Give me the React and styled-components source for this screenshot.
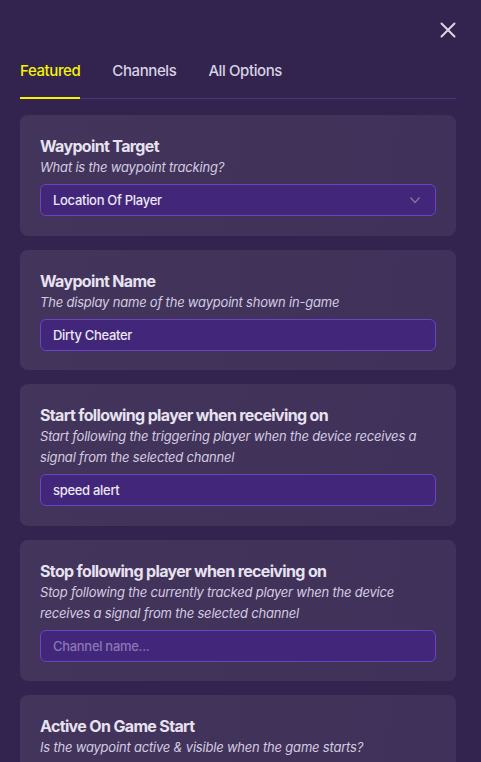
import React, { useState } from "react";
import styled, { createGlobalStyle } from "styled-components";

const GlobalStyle = createGlobalStyle`
  html, body {
    margin: 0;
    padding: 0;
    background: #33234f;
    overflow: hidden;
  }
  * { box-sizing: border-box; }
`;

const options = [
  {
    title: "Waypoint Target",
    desc: "What is the waypoint tracking?",
    kind: "select",
    value: "Location Of Player",
  },
  {
    title: "Waypoint Name",
    desc: "The display name of the waypoint shown in-game",
    kind: "input",
    value: "Dirty Cheater",
  },
  {
    title: "Start following player when receiving on",
    desc: "Start following the triggering player when the device receives a signal from the selected channel",
    kind: "input",
    value: "speed alert",
  },
  {
    title: "Stop following player when receiving on",
    desc: "Stop following the currently tracked player when the device receives a signal from the selected channel",
    kind: "input",
    value: "",
    placeholder: "Channel name...",
  },
  {
    title: "Active On Game Start",
    desc: "Is the waypoint active & visible when the game starts?",
    kind: "none",
  },
];

function App() {
  const [tab, setTab] = useState("Featured");

  return (
    <>
      <GlobalStyle />
      <Panel>
        <Header>
          <CloseButton aria-label="close">
            <svg width="16" height="16" viewBox="0 0 16 16">
              <path d="M1.5 1.5 L14.5 14.5 M14.5 1.5 L1.5 14.5" stroke="#dcd6e6" strokeWidth="2" strokeLinecap="round" />
            </svg>
          </CloseButton>
        </Header>

        <Tabs>
          {["Featured", "Channels", "All Options"].map((t) => (
            <Tab key={t} active={tab === t} onClick={() => setTab(t)}>
              {t}
            </Tab>
          ))}
        </Tabs>

        <CardList>
          {options.map((o) => (
            <Card key={o.title}>
              <Title>{o.title}</Title>
              <Desc>{o.desc}</Desc>
              {o.kind === "select" && (
                <Field>
                  <span>{o.value}</span>
                  <svg width="12" height="8" viewBox="0 0 12 8">
                    <polyline points="1.5,1.5 6,6.5 10.5,1.5" fill="none" stroke="#86769f" strokeWidth="1.2" />
                  </svg>
                </Field>
              )}
              {o.kind === "input" && (
                <TextInput defaultValue={o.value} placeholder={o.placeholder} />
              )}
            </Card>
          ))}
        </CardList>
      </Panel>
    </>
  );
}

export default App;

const Panel = styled.div`
  height: 762px;
  overflow: hidden;
  padding: 22px 25px 0 20px;
  font-family: Inter, "Liberation Sans", sans-serif;
  color: #e6e1ef;
`;

const Header = styled.div`
  display: flex;
  justify-content: flex-end;
  height: 16px;
`;

const CloseButton = styled.button`
  background: none;
  border: none;
  padding: 0;
  width: 16px;
  height: 16px;
  cursor: pointer;
  display: flex;
`;

const Tabs = styled.div`
  display: flex;
  gap: 32px;
  margin-top: 23px;
  border-bottom: 1px solid #4a3184;
`;

const Tab = styled.div`
  font-size: 15px;
  font-weight: 500;
  line-height: 20px;
  letter-spacing: -0.4px;
  padding-bottom: 16px;
  margin-bottom: -1px;
  cursor: pointer;
  color: ${({ active }) => (active ? "#f6f600" : "#d8d2e4")};
  border-bottom: 2px solid ${({ active }) => (active ? "#f6f600" : "transparent")};
`;

const CardList = styled.div`
  display: flex;
  flex-direction: column;
  gap: 14px;
  margin-top: 16px;
`;

const Card = styled.div`
  background: linear-gradient(100deg, #43345b 0%, #40315a 100%);
  border-radius: 8px;
  padding: 20px 20px 19.5px;
  display: flex;
  flex-direction: column;
`;

const Title = styled.div`
  font-size: 16px;
  font-weight: 700;
  line-height: 22px;
  letter-spacing: -0.65px;
  color: #e7e2ef;
`;

const Desc = styled.div`
  font-size: 13px;
  font-style: italic;
  line-height: 21px;
  letter-spacing: -0.2px;
  color: #d3cce0;
`;

const Field = styled.div`
  margin-top: 6px;
  height: 32px;
  border: 1px solid #6a44c4;
  border-radius: 6px;
  background: #42267a;
  padding: 0 14px 0 12px;
  display: flex;
  align-items: center;
  justify-content: space-between;
  font-size: 13px;
  font-weight: 500;
  letter-spacing: -0.3px;
  color: #ebe6f2;
`;

const TextInput = styled.input`
  margin-top: 6px;
  height: 32px;
  width: 100%;
  border: 1px solid #6a44c4;
  border-radius: 6px;
  background: #42267a;
  padding: 0 12px;
  font-family: Inter, "Liberation Sans", sans-serif;
  font-size: 13px;
  font-weight: 500;
  letter-spacing: -0.3px;
  color: #ebe6f2;
  outline: none;

  &::placeholder {
    color: #8a77b6;
  }
`;
